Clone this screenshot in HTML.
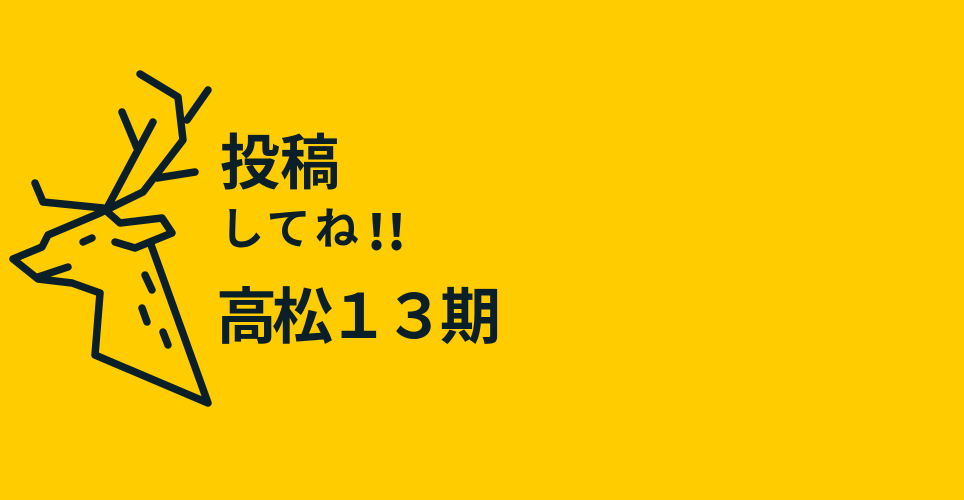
<!DOCTYPE html>
<html><head><meta charset="utf-8"><style>
html,body{margin:0;padding:0}
body{width:964px;height:500px;background:#ffcc00;position:relative;overflow:hidden;font-family:"Liberation Sans","Noto Sans CJK JP",sans-serif;font-weight:700;color:#0b1f29}
svg{position:absolute;left:0;top:0}
.t{position:absolute;white-space:nowrap;line-height:1}
.ex{font-family:"Noto Sans CJK JP",sans-serif;font-weight:900;font-size:48px}
</style></head><body>
<svg width="964" height="500" viewBox="0 0 964 500" fill="none" stroke="#0b1f29" stroke-width="7.5" stroke-linecap="round" stroke-linejoin="round">
<polyline points="140,74 178,97 183,140 143,192 100,213 48,235 42,247 13,259 38,279 72,283 100,293 95,355 208,403 150,242"/>
<line x1="208" y1="90" x2="187" y2="120"/>
<line x1="195" y1="172" x2="157" y2="178"/>
<line x1="122" y1="112" x2="137" y2="148"/>
<line x1="153" y1="122" x2="107" y2="208"/>
<polyline points="35,183 43,202 103,208 120,223 162,218 172,233 135,248 115,242"/>
<line x1="83" y1="242" x2="92" y2="238"/>
<line x1="38" y1="277" x2="68" y2="267"/>
<line x1="145" y1="275" x2="152" y2="290"/>
<line x1="142" y1="308" x2="147" y2="322"/>
<line x1="163" y1="332" x2="168" y2="345"/>
</svg>
<div class="t" style="left:220px;top:134px;font-size:60px">投稿</div>
<div class="t" style="left:220px;top:208px;font-size:44px;letter-spacing:4px">してね</div>
<div class="t ex" style="left:367px;top:205px">!</div>
<div class="t ex" style="left:387px;top:205px">!</div>
<div class="t" style="left:216px;top:287px;font-size:61px;letter-spacing:-5px">高松１３期</div>
</body></html>
